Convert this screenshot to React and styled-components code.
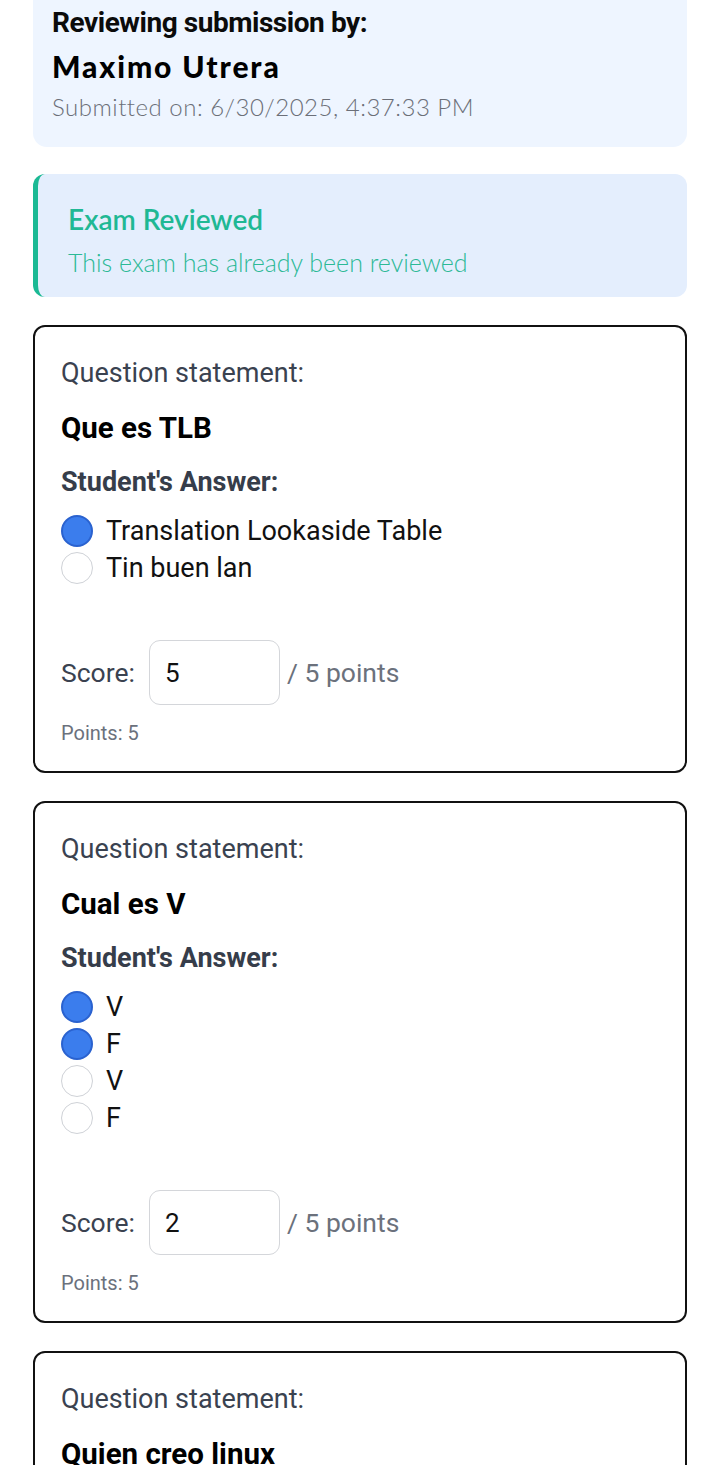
import React from 'react';
import styled, { createGlobalStyle } from 'styled-components';

const GlobalStyle = createGlobalStyle`
    body {
        margin: 0;
        background: #ffffff;
        font-family: Roboto, "Liberation Sans", sans-serif;
    }
`;

const Page = styled.div`
    width: 720px;
    padding: 0 33px 40px;
    box-sizing: border-box;
    display: flex;
    flex-direction: column;
`;

const SubmissionHeader = styled.div`
    margin-top: -20px;
    background: #eef5ff;
    border-radius: 14px;
    padding: 27px 19px 25px;
    display: flex;
    flex-direction: column;
`;

const ReviewingLabel = styled.div`
    font-size: 28px;
    line-height: 32px;
    font-weight: 700;
    color: #0b0b0b;
    letter-spacing: -0.45px;
`;

const StudentName = styled.div`
    margin-top: 9px;
    font-family: Lato, sans-serif;
    font-size: 30px;
    line-height: 36px;
    font-weight: 900;
    letter-spacing: 1.9px;
    color: #000;
`;

const SubmittedOn = styled.div`
    margin-top: 8px;
    font-family: Lato, sans-serif;
    font-size: 24px;
    line-height: 30px;
    font-weight: 300;
    letter-spacing: 0.5px;
    color: #6b6f78;
`;

const Alert = styled.div`
    margin-top: 27px;
    background: #e4eefd;
    border-left: 5px solid #1bb994;
    border-radius: 12px;
    padding: 29px 30px 20px;
    display: flex;
    flex-direction: column;
`;

const AlertTitle = styled.div`
    font-family: Lato, sans-serif;
    font-size: 28px;
    line-height: 32px;
    font-weight: 600;
    color: #1fb894;
`;

const AlertText = styled.div`
    margin-top: 12px;
    font-family: Lato, sans-serif;
    font-size: 25px;
    line-height: 30px;
    font-weight: 300;
    color: #2cb996;
`;

const Card = styled.div`
    margin-top: 28px;
    border: 2px solid #111;
    border-radius: 12px;
    padding: 30px 26px 28px;
    display: flex;
    flex-direction: column;
`;

const StatementLabel = styled.div`
    font-size: 27px;
    line-height: 32px;
    color: #3a4250;
`;

const QuestionTitle = styled.div`
    margin-top: 23px;
    font-size: 29.5px;
    line-height: 32px;
    font-weight: 700;
    color: #000;
`;

const AnswerHeading = styled.div`
    margin-top: 22px;
    font-size: 27px;
    line-height: 32px;
    font-weight: 700;
    color: #363d4a;
`;

const Options = styled.div`
    margin-top: 17px;
    display: flex;
    flex-direction: column;
    gap: 5px;
`;

const Option = styled.div`
    display: flex;
    align-items: center;
    gap: 13px;
    height: 32px;
    font-size: 27px;
    color: #111;
`;

const Radio = styled.span`
    width: 32px;
    height: 32px;
    box-sizing: border-box;
    border-radius: 50%;
    flex-shrink: 0;
    background: ${(p) => (p.$checked ? '#3b7ded' : '#fff')};
    border: ${(p) => (p.$checked ? '2px solid #2a62cf' : '1.5px solid #cfd2d7')};
`;

const ScoreRow = styled.div`
    margin-top: 56px;
    display: flex;
    align-items: center;
    height: 65px;
    font-size: 26.5px;
    color: #3a4250;
`;

const ScoreInput = styled.input`
    margin-left: 14px;
    width: 131px;
    height: 65px;
    box-sizing: border-box;
    border: 1.5px solid #d4d6da;
    border-radius: 11px;
    padding: 0 15px;
    font-family: Roboto, sans-serif;
    font-size: 26px;
    color: #111;
    background: #fff;
    outline: none;
`;

const OutOf = styled.span`
    margin-left: 7px;
    color: #6b717c;
`;

const PointsNote = styled.div`
    margin-top: 18px;
    font-size: 20px;
    line-height: 20px;
    color: #6b717c;
`;

const questions = [
    {
        title: 'Que es TLB',
        options: [
            { text: 'Translation Lookaside Table', checked: true },
            { text: 'Tin buen lan', checked: false },
        ],
        score: 5,
        points: 5,
    },
    {
        title: 'Cual es V',
        options: [
            { text: 'V', checked: true },
            { text: 'F', checked: true },
            { text: 'V', checked: false },
            { text: 'F', checked: false },
        ],
        score: 2,
        points: 5,
    },
    {
        title: 'Quien creo linux',
        options: [
            { text: 'Linus Torvalds', checked: true },
            { text: 'Bill Gates', checked: false },
        ],
        score: 5,
        points: 5,
    },
];

function QuestionCard({ q }) {
    return (
        <Card>
            <StatementLabel>Question statement:</StatementLabel>
            <QuestionTitle>{q.title}</QuestionTitle>
            <AnswerHeading>Student's Answer:</AnswerHeading>
            <Options>
                {q.options.map((o, i) => (
                    <Option key={i}>
                        <Radio $checked={o.checked} />
                        {o.text}
                    </Option>
                ))}
            </Options>
            <ScoreRow>
                Score:
                <ScoreInput type="number" defaultValue={q.score} readOnly />
                <OutOf>/ {q.points} points</OutOf>
            </ScoreRow>
            <PointsNote>Points: {q.points}</PointsNote>
        </Card>
    );
}

export default function App() {
    return (
        <Page>
            <GlobalStyle />
            <SubmissionHeader>
                <ReviewingLabel>Reviewing submission by:</ReviewingLabel>
                <StudentName>Maximo Utrera</StudentName>
                <SubmittedOn>Submitted on: 6/30/2025, 4:37:33 PM</SubmittedOn>
            </SubmissionHeader>
            <Alert>
                <AlertTitle>Exam Reviewed</AlertTitle>
                <AlertText>This exam has already been reviewed</AlertText>
            </Alert>
            {questions.map((q, i) => (
                <QuestionCard key={i} q={q} />
            ))}
        </Page>
    );
}
